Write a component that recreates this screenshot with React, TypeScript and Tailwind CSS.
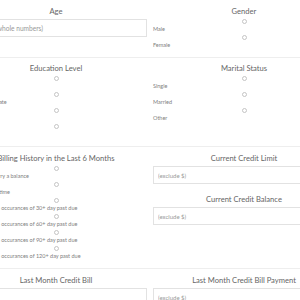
import React from "react";

const Title = ({ children }: { children: React.ReactNode }) => (
  <div className="h-[12px] leading-[12px] text-center text-[7.6px] text-[#666] whitespace-nowrap">{children}</div>
);

const Radio = ({ label }: { label: string }) => (
  <div className="h-[16px]">
    <div className="flex h-[7px] items-center justify-center">
      <span className="block h-[5px] w-[5px] rounded-full border border-[#c4c4c4] bg-white" />
    </div>
    <div className="h-[9px] whitespace-nowrap text-[5.5px] leading-[9px] text-[#808080]">{label}</div>
  </div>
);

const Field = ({ placeholder, className = "" }: { placeholder: string; className?: string }) => (
  <input
    readOnly
    placeholder={placeholder}
    className={"block h-[18px] w-full border border-[#e2e2e2] bg-white px-[4px] text-[#555] outline-none placeholder:text-[#999] " + className}
  />
);

const Hr = () => <div className="h-px bg-[#eee]" />;

export default function App() {
  return (
    <div className="h-[300px] w-[300px] overflow-hidden bg-white" style={{ fontFamily: "Lato, 'Open Sans', sans-serif" }}>
      <div className="ml-[-38px] w-[376px]">
        <div className="grid grid-cols-2 pt-[5px] pb-[7px]">
          <div className="px-[3px]">
            <Title>Age</Title>
            <Field placeholder="(in years, whole numbers)" className="mt-[2px] text-[6.6px]" />
          </div>
          <div className="px-[3px]">
            <Title>Gender</Title>
            <div className="mt-[1px]">
              <Radio label="Male" />
              <Radio label="Female" />
            </div>
          </div>
        </div>
        <Hr />
        <div className="grid grid-cols-2 pt-[4px] pb-[7px]">
          <div className="px-[3px]">
            <Title>Education Level</Title>
            <div className="mt-[1px]">
              <Radio label="High School" />
              <Radio label="College Graduate" />
              <Radio label="Graduate" />
              <Radio label="Other" />
            </div>
          </div>
          <div className="px-[3px]">
            <Title>Marital Status</Title>
            <div className="mt-[1px]">
              <Radio label="Single" />
              <Radio label="Married" />
              <Radio label="Other" />
            </div>
          </div>
        </div>
        <Hr />
        <div className="grid grid-cols-2 pt-[5px] pb-[7px]">
          <div className="px-[3px]">
            <Title>Billing History in the Last 6 Months</Title>
            <div className="mt-[1px]">
              <Radio label="Minimums, carry a balance" />
              <Radio label="Paid in full on time" />
              <Radio label="Had 1 or more occurances of 30+ day past due" />
              <Radio label="Had 1 or more occurances of 60+ day past due" />
              <Radio label="Had 1 or more occurances of 90+ day past due" />
              <Radio label="Had 1 or more occurances of 120+ day past due" />
            </div>
          </div>
          <div className="px-[3px]">
            <Title>Current Credit Limit</Title>
            <Field placeholder="(exclude $)" className="mt-[2px] text-[6px]" />
            <div className="mt-[9px]">
              <Title>Current Credit Balance</Title>
            </div>
            <Field placeholder="(exclude $)" className="mt-[2px] text-[6px]" />
          </div>
        </div>
        <Hr />
        <div className="grid grid-cols-2 pt-[5px] pb-[7px]">
          <div className="px-[3px]">
            <Title>Last Month Credit Bill</Title>
            <Field placeholder="(exclude $)" className="mt-[2px] text-[6px]" />
          </div>
          <div className="px-[3px]">
            <Title>Last Month Credit Bill Payment</Title>
            <Field placeholder="(exclude $)" className="mt-[2px] text-[6px]" />
          </div>
        </div>
      </div>
    </div>
  );
}
